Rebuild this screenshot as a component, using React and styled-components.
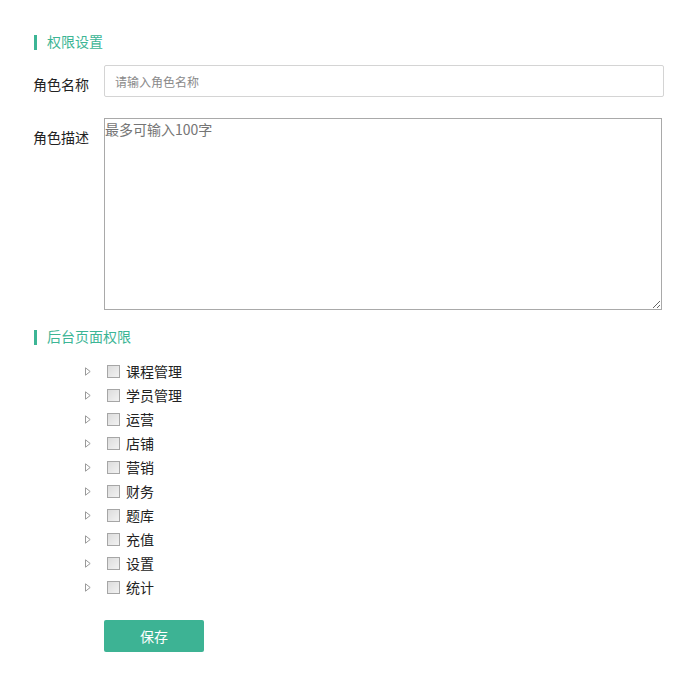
import styled, { createGlobalStyle } from "styled-components";

const GlobalStyle = createGlobalStyle`
  body {
    margin: 0;
    background: #fff;
    font-family: "Noto Sans CJK SC", "Liberation Sans", sans-serif;
    color: #333;
  }
`;

const Page = styled.div`
  padding: 35px 0 0 33px;
  width: 694px;
  box-sizing: border-box;
`;

const SectionTitle = styled.div`
  margin-left: 1px;
  height: 15px;
  border-left: 3px solid #3cb595;
  padding-left: 10px;
  font-size: 14px;
  line-height: 13px;
  color: #3cb595;
  margin-top: ${(p) => p.$top || 0}px;
`;

const FormRow = styled.div`
  display: flex;
  align-items: flex-start;
  margin-top: ${(p) => p.$top}px;
`;

const Label = styled.label`
  width: 71px;
  flex-shrink: 0;
  padding-top: 11px;
  line-height: 16px;
  font-size: 14px;
  color: #222;
`;

const TextInput = styled.input`
  width: 560px;
  height: 32px;
  box-sizing: border-box;
  border: 1px solid #d4d4d4;
  border-radius: 2px;
  padding: 0 10px;
  font-family: inherit;
  font-size: 12px;
  outline: none;
  &::placeholder {
    color: #8a8a8a;
  }
`;

const TextArea = styled.textarea`
  width: 558px;
  height: 192px;
  box-sizing: border-box;
  border: 1px solid #a9a9a9;
  padding: 0;
  margin: 0;
  font-family: inherit;
  font-size: 14px;
  line-height: 20px;
  outline: none;
  &::placeholder {
    color: #757575;
  }
`;

const Tree = styled.ul`
  list-style: none;
  margin: 14px 0 0 52px;
  padding: 0;
`;

const TreeItem = styled.li`
  display: flex;
  align-items: center;
  height: 24px;
  font-size: 14px;
  color: #222;
`;

const Switcher = styled.span`
  width: 22px;
  display: flex;
  align-items: center;
  justify-content: flex-start;
`;

const Check = styled.span`
  width: 13px;
  height: 13px;
  box-sizing: border-box;
  border: 1px solid #a6a6a6;
  background: linear-gradient(135deg, #dcdcdc 0%, #f2f2f2 100%);
  margin-right: 6px;
`;

const SaveButton = styled.button`
  margin: 21px 0 0 71px;
  width: 100px;
  height: 32px;
  border: none;
  border-radius: 2px;
  background: #3db394;
  color: #fff;
  font-family: inherit;
  font-size: 14px;
  cursor: pointer;
`;

const items = ["课程管理", "学员管理", "运营", "店铺", "营销", "财务", "题库", "充值", "设置", "统计"];

const Caret = () => (
  <svg width="6" height="9" viewBox="0 0 6 9">
    <path d="M0.5 0.8 L5.2 4.5 L0.5 8.2 Z" fill="none" stroke="#9a9a9a" strokeWidth="1" />
  </svg>
);

export default function App() {
  return (
    <Page>
      <GlobalStyle />
      <SectionTitle>权限设置</SectionTitle>
      <FormRow $top={15}>
        <Label>角色名称</Label>
        <TextInput placeholder="请输入角色名称" />
      </FormRow>
      <FormRow $top={21}>
        <Label>角色描述</Label>
        <TextArea placeholder="最多可输入100字" />
      </FormRow>
      <SectionTitle $top={20}>后台页面权限</SectionTitle>
      <Tree>
        {items.map((name) => (
          <TreeItem key={name}>
            <Switcher>
              <Caret />
            </Switcher>
            <Check />
            {name}
          </TreeItem>
        ))}
      </Tree>
      <SaveButton>保存</SaveButton>
    </Page>
  );
}
